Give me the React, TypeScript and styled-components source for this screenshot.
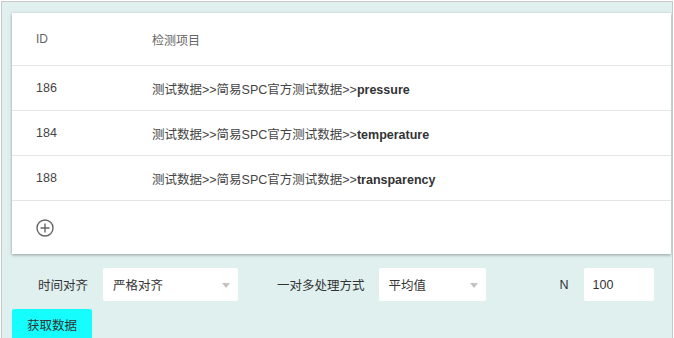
import styled, { createGlobalStyle } from "styled-components";

const Global = createGlobalStyle`
  html, body { margin: 0; padding: 0; background: #fff; }
  body { font-family: "Liberation Sans", "Noto Sans CJK SC", sans-serif; }
`;

const Frame = styled.div`
  box-sizing: border-box;
  margin: 1px 0 0 1px;
  width: 672px;
  height: 337px;
  border: 1px solid #c6c9c9;
  border-bottom: none;
  background: #dff0ee;
  padding: 11px 1px 0 10px;
  overflow: hidden;
`;

const Card = styled.div`
  background: #fff;
  box-shadow: 0 1px 3px rgba(0, 0, 0, 0.35);
`;

const Row = styled.div<{ $h: number }>`
  box-sizing: border-box;
  display: flex;
  align-items: center;
  height: ${({ $h }) => $h}px;
  padding-left: 24px;
  border-bottom: 1px solid #e6e6e6;
  font-size: 12.5px;
  color: #444;
  &:last-child { border-bottom: none; }
`;

const IdCell = styled.div`
  width: 116px;
`;

const Item = styled.div`
  b { color: #333; font-weight: bold; }
`;

const Header = styled(Row)`
  color: #666;
  font-size: 12px;
`;

const AddBtn = styled.div`
  width: 18px;
  height: 18px;
  display: flex;
`;

const Form = styled.div`
  display: flex;
  align-items: center;
  height: 33px;
  margin-top: 14px;
  padding-left: 26px;
  font-size: 12.5px;
  color: #333;
`;

const Label = styled.span<{ $ml?: number; $mr: number }>`
  margin-left: ${({ $ml }) => $ml ?? 0}px;
  margin-right: ${({ $mr }) => $mr}px;
`;

const Select = styled.div<{ $w: number }>`
  position: relative;
  box-sizing: border-box;
  width: ${({ $w }) => $w}px;
  height: 33px;
  background: #fff;
  border-radius: 2px;
  padding-left: 10px;
  display: flex;
  align-items: center;
  &::after {
    content: "";
    position: absolute;
    right: 8px;
    top: 15px;
    border-left: 4px solid transparent;
    border-right: 4px solid transparent;
    border-top: 5px solid #c2c2c2;
  }
`;

const Input = styled.div`
  box-sizing: border-box;
  width: 70px;
  height: 33px;
  background: #fff;
  border-radius: 2px;
  padding-left: 9px;
  display: flex;
  align-items: center;
`;

const Button = styled.button`
  margin-top: 8px;
  width: 80px;
  height: 34px;
  border: none;
  border-radius: 2px;
  background: #16fdfd;
  color: #333;
  font-family: inherit;
  font-size: 12.5px;
  padding: 0 0 4px;
  display: block;
`;

const rows = [
  { id: 186, name: "pressure" },
  { id: 184, name: "temperature" },
  { id: 188, name: "transparency" },
];

export default function App() {
  return (
    <>
      <Global />
      <Frame>
        <Card>
          <Header $h={53}>
            <IdCell>ID</IdCell>
            <Item>检测项目</Item>
          </Header>
          {rows.map((r) => (
            <Row $h={45} key={r.id}>
              <IdCell>{r.id}</IdCell>
              <Item>
                测试数据&gt;&gt;简易SPC官方测试数据&gt;&gt;<b>{r.name}</b>
              </Item>
            </Row>
          ))}
          <Row $h={53}>
            <AddBtn>
              <svg width="18" height="18" viewBox="0 0 18 18">
                <circle cx="9" cy="9" r="8" fill="none" stroke="#666" strokeWidth="1.4" />
                <path d="M9 4.5v9M4.5 9h9" stroke="#666" strokeWidth="1.4" />
              </svg>
            </AddBtn>
          </Row>
        </Card>
        <Form>
          <Label $mr={15}>时间对齐</Label>
          <Select $w={135}>严格对齐</Select>
          <Label $ml={39} $mr={14}>一对多处理方式</Label>
          <Select $w={107}>平均值</Select>
          <Label $ml={74} $mr={15}>N</Label>
          <Input>100</Input>
        </Form>
        <Button>获取数据</Button>
      </Frame>
    </>
  );
}
